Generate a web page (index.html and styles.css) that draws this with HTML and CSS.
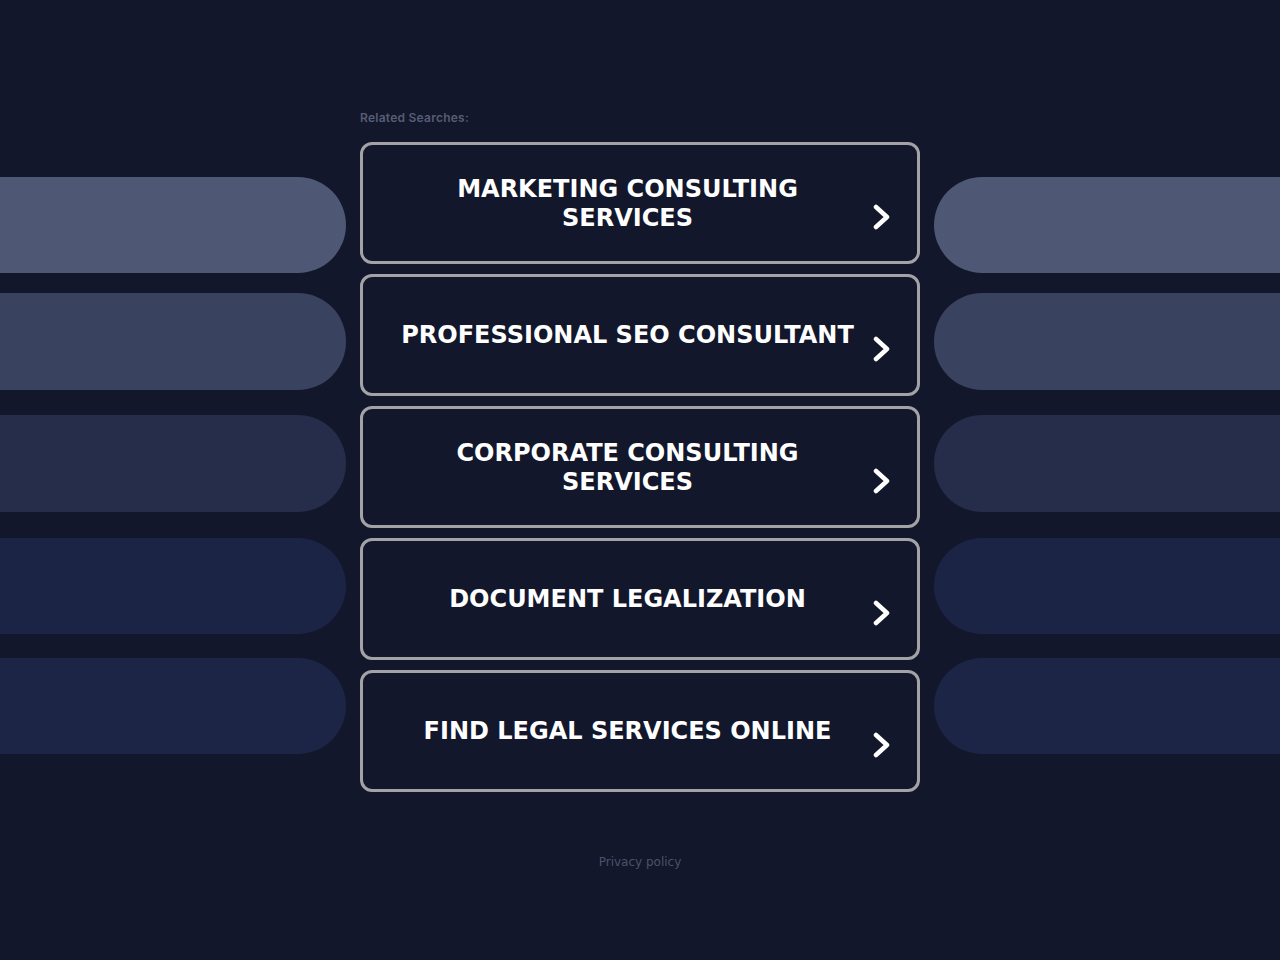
FILE: index.html
```html
<!DOCTYPE html>
<html>
<head>
<meta charset="utf-8">
<link rel="stylesheet" href="styles.css">
</head>
<body>
<div class="page">
  <div class="side side-left">
    <div class="pill p1"></div>
    <div class="pill p2"></div>
    <div class="pill p3"></div>
    <div class="pill p4"></div>
    <div class="pill p5"></div>
  </div>
  <div class="center">
    <div class="label">Related Searches:</div>
    <div class="list">
      <a class="btn" href="#"><span class="txt">MARKETING CONSULTING SERVICES</span><svg class="chev" viewBox="0 0 20 26"><path d="M4 3 L15 13 L4 23" fill="none" stroke="#fff" stroke-width="4.5" stroke-linecap="round" stroke-linejoin="round"/></svg></a>
      <a class="btn" href="#"><span class="txt">PROFESSIONAL SEO CONSULTANT</span><svg class="chev" viewBox="0 0 20 26"><path d="M4 3 L15 13 L4 23" fill="none" stroke="#fff" stroke-width="4.5" stroke-linecap="round" stroke-linejoin="round"/></svg></a>
      <a class="btn" href="#"><span class="txt">CORPORATE CONSULTING SERVICES</span><svg class="chev" viewBox="0 0 20 26"><path d="M4 3 L15 13 L4 23" fill="none" stroke="#fff" stroke-width="4.5" stroke-linecap="round" stroke-linejoin="round"/></svg></a>
      <a class="btn" href="#"><span class="txt">DOCUMENT LEGALIZATION</span><svg class="chev" viewBox="0 0 20 26"><path d="M4 3 L15 13 L4 23" fill="none" stroke="#fff" stroke-width="4.5" stroke-linecap="round" stroke-linejoin="round"/></svg></a>
      <a class="btn" href="#"><span class="txt">FIND LEGAL SERVICES ONLINE</span><svg class="chev" viewBox="0 0 20 26"><path d="M4 3 L15 13 L4 23" fill="none" stroke="#fff" stroke-width="4.5" stroke-linecap="round" stroke-linejoin="round"/></svg></a>
    </div>
    <div class="footer"><a href="#">Privacy policy</a></div>
  </div>
  <div class="side side-right">
    <div class="pill p1"></div>
    <div class="pill p2"></div>
    <div class="pill p3"></div>
    <div class="pill p4"></div>
    <div class="pill p5"></div>
  </div>
</div>
</body>
</html>
```
FILE: styles.css
```css
html, body {
  margin: 0;
  padding: 0;
  background: #12172c;
  height: 100%;
}
body {
  font-family: "DejaVu Sans", "Liberation Sans", sans-serif;
}
.page {
  display: flex;
  gap: 14px;
  width: 1280px;
  min-height: 960px;
}
.side {
  width: 346px;
  display: flex;
  flex-direction: column;
  padding-top: 177px;
}
.pill {
  height: 96px;
  flex: none;
}
.side-left .pill { border-radius: 0 48px 48px 0; }
.side-right .pill { border-radius: 48px 0 0 48px; }
.p1 { background: #4e5875; }
.p2 { background: #39425f; margin-top: 20px; height: 97px; }
.p3 { background: #252d4a; margin-top: 25px; height: 97px; }
.p4 { background: #1c2445; margin-top: 26px; }
.p5 { background: #1c2545; margin-top: 24px; }
.center {
  width: 560px;
  display: flex;
  flex-direction: column;
  padding-top: 109px;
}
.label {
  font-family: Inter, "Open Sans", sans-serif;
  font-size: 12px;
  font-weight: 600;
  letter-spacing: 0.25px;
  color: #575d74;
  line-height: 17px;
  margin-bottom: 16px;
}
.list {
  display: flex;
  flex-direction: column;
  gap: 10px;
}
.btn {
  box-sizing: border-box;
  height: 122px;
  border: 3px solid #a3a3a7;
  border-radius: 12px;
  display: flex;
  align-items: center;
  padding: 0 25px 0 20px;
  text-decoration: none;
  color: #fff;
}
.txt {
  flex: 1;
  text-align: center;
  font-weight: bold;
  font-size: 24px;
  line-height: 29px;
  letter-spacing: 0;
  color: #fff;
  padding: 1px 14px 0;
}
.chev {
  width: 20px;
  height: 26px;
  flex: none;
  margin-top: 27px;
}
.footer {
  text-align: center;
  margin-top: 62px;
  font-size: 12px;
  line-height: 17px;
}
.footer a {
  color: #4c5269;
  text-decoration: none;
}
```
